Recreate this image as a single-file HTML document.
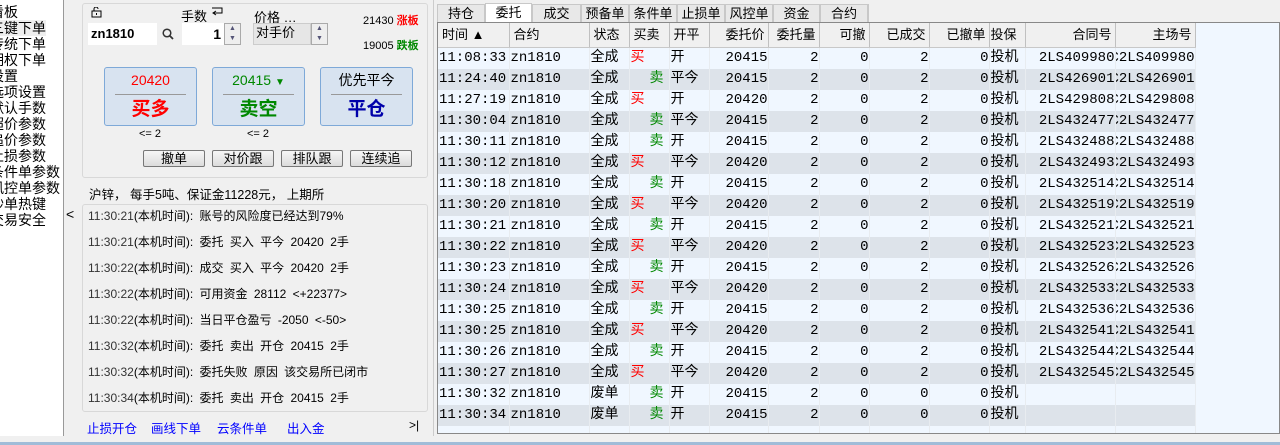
<!DOCTYPE html>
<html><head><meta charset="utf-8"><style>
*{margin:0;padding:0;box-sizing:border-box}
body{width:1280px;height:445px;background:#f0f0f0;position:relative;overflow:hidden;font-family:"Liberation Sans","Noto Sans CJK SC",sans-serif;font-size:12px;color:#000}
.abs{position:absolute}
#nav{left:0;top:0;width:64px;height:436px;background:#fff;border-right:1px solid #999;overflow:hidden}
#nav div{position:absolute;left:-10px;font-size:14px;line-height:16px;white-space:nowrap}
.box{border:1px solid #d8d8d8;border-radius:3px;background:#f0f0f0}
.bb{position:absolute;width:93px;height:59px;background:#d8e3f0;border:1px solid #7ea9d8;border-radius:3px;text-align:center}
.bb .p{font-size:14px;line-height:24px;margin:0 10px;border-bottom:1px solid #999;height:27px}
.bb .t{font-size:19px;font-weight:bold;line-height:30px}
.ab{position:absolute;top:150px;width:62px;height:17px;border:1px solid #777;border-radius:2px;background:linear-gradient(#f6f6f6,#dcdcdc);text-align:center;font-size:13px;line-height:15px}
.log{position:absolute;left:88px;font-size:12px;white-space:nowrap;word-spacing:3px}
.log b{font-weight:normal;color:#333;word-spacing:0}
.lk{position:absolute;top:418px;color:#0000ff;font-size:12.5px}
.tab{position:absolute;top:4px;height:19px;border:1px solid #c8c8c8;border-bottom:none;background:#e8e8e8;font-size:13px;text-align:center;line-height:18px}
#tbl{left:437px;top:22px;width:843px;height:412px;border:1px solid #888;background:#f0f7ff;overflow:hidden}
table{border-collapse:collapse;table-layout:fixed;font-size:14px;width:757px}
td{height:21px;white-space:nowrap;overflow:hidden;border-right:1px solid #e8ecf0;padding:0 0 0 1px;line-height:21px;font-family:"Liberation Mono","Noto Sans CJK SC",monospace}
tr.h td{height:24px;background:#f0f0f0;border-right:1px solid #c0c0c0;border-bottom:1px solid #c8c8c8;font-family:"Liberation Sans","Noto Sans CJK SC",sans-serif;font-size:13px;padding-left:4px}
tr.h td.r{padding-right:3px}
tr.d td{background:#dde3ea}
.r{text-align:right}
.red{color:#f00}.grn{color:#080}
td.s{padding-left:20px}
</style></head><body>
<div id="nav" class="abs">
<div style="top:4px">看板</div>
<div style="top:20px;background:#eee">三键下单</div>
<div style="top:36px">传统下单</div>
<div style="top:52px">期权下单</div>
<div style="top:68px">设置</div>
<div style="top:84px">选项设置</div>
<div style="top:100px">默认手数</div>
<div style="top:116px">超价参数</div>
<div style="top:132px">追价参数</div>
<div style="top:148px">止损参数</div>
<div style="top:164px">条件单参数</div>
<div style="top:180px">风控单参数</div>
<div style="top:196px">秒单热键</div>
<div style="top:212px">交易安全</div>
</div>
<div class="abs" style="left:66px;top:206px;font-size:14px">&lt;</div>
<div class="abs box" style="left:82px;top:3px;width:346px;height:175px"></div>
<svg class="abs" style="left:91px;top:7px" width="12" height="11"><rect x="1" y="4" width="9" height="6" fill="none" stroke="#000"/><path d="M3 4V2a2 2 0 0 1 4 0" fill="none" stroke="#000"/><rect x="5" y="6" width="1" height="2"/></svg>
<div class="abs" style="left:88px;top:23px;width:69px;height:22px;background:#fff;font-size:13px;font-weight:bold;line-height:22px;padding-left:3px">zn1810</div>
<svg class="abs" style="left:162px;top:28px" width="12" height="12"><circle cx="5" cy="5" r="3.8" fill="none" stroke="#333" stroke-width="1.5"/><path d="M8 8l3 3" stroke="#333" stroke-width="1.8"/></svg>
<div class="abs" style="left:181px;top:6px;font-size:13px">手数</div>
<svg class="abs" style="left:211px;top:7px" width="12" height="10"><path d="M1 1h10v5H3M5 4L2 6l3 2" fill="none" stroke="#000"/></svg>
<div class="abs" style="left:182px;top:23px;width:42px;height:22px;background:#fff;text-align:right;font-size:14px;font-weight:bold;line-height:22px;padding-right:3px">1</div>
<div class="abs" style="left:224px;top:23px;width:17px;height:22px;border:1px solid #aaa;background:#eee;font-size:7px;text-align:center;line-height:10px;color:#557">▲<br>▼</div>
<div class="abs" style="left:254px;top:7px;font-size:13px">价格 …</div>
<div class="abs" style="left:253px;top:23px;width:58px;height:22px;background:#e6e6e6;border:1px solid #ccc;font-size:13px;line-height:18px;padding-left:2px">对手价</div>
<div class="abs" style="left:311px;top:23px;width:17px;height:22px;border:1px solid #aaa;background:#eee;font-size:7px;text-align:center;line-height:10px;color:#557">▲<br>▼</div>
<div class="abs" style="left:363px;top:12px;font-size:11px">21430 <span style="color:#f00;font-weight:bold">涨板</span></div>
<div class="abs" style="left:363px;top:37px;font-size:11px">19005 <span style="color:#080;font-weight:bold">跌板</span></div>
<div class="bb" style="left:104px;top:67px"><div class="p red">20420</div><div class="t red">买多</div></div>
<div class="bb" style="left:212px;top:67px"><div class="p grn">20415 <span style="font-size:10px">▼</span></div><div class="t grn">卖空</div></div>
<div class="bb" style="left:320px;top:67px"><div class="p">优先平今</div><div class="t" style="color:#00a">平仓</div></div>
<div class="abs" style="left:139px;top:128px;font-size:11px">&lt;= 2</div>
<div class="abs" style="left:247px;top:128px;font-size:11px">&lt;= 2</div>
<div class="ab" style="left:143px">撤单</div><div class="ab" style="left:212px">对价跟</div><div class="ab" style="left:281px">排队跟</div><div class="ab" style="left:350px">连续追</div>
<div class="abs" style="left:89px;top:184px;font-size:12.5px">沪锌， 每手5吨、保证金11228元， 上期所</div>
<div class="abs box" style="left:82px;top:204px;width:346px;height:208px"></div>
<div class="log" style="top:207px"><b>11:30:21</b>(本机时间): 账号的风险度已经达到79%</div>
<div class="log" style="top:233px"><b>11:30:21</b>(本机时间): 委托 买入 平今 20420 2手</div>
<div class="log" style="top:259px"><b>11:30:22</b>(本机时间): 成交 买入 平今 20420 2手</div>
<div class="log" style="top:285px"><b>11:30:22</b>(本机时间): 可用资金 28112 &lt;+22377&gt;</div>
<div class="log" style="top:311px"><b>11:30:22</b>(本机时间): 当日平仓盈亏 -2050 &lt;-50&gt;</div>
<div class="log" style="top:337px"><b>11:30:32</b>(本机时间): 委托 卖出 开仓 20415 2手</div>
<div class="log" style="top:363px"><b>11:30:32</b>(本机时间): 委托失败 原因 该交易所已闭市</div>
<div class="log" style="top:389px"><b>11:30:34</b>(本机时间): 委托 卖出 开仓 20415 2手</div>
<div class="lk" style="left:87px">止损开仓</div><div class="lk" style="left:151px">画线下单</div><div class="lk" style="left:217px">云条件单</div><div class="lk" style="left:287px">出入金</div>
<div class="abs" style="left:409px;top:418px;font-size:12px">&gt;|</div>
<div class="abs" style="left:433px;top:0;width:1px;height:436px;background:#ccc"></div>
<div class="tab" style="left:437px;width:48px">持仓</div>
<div class="tab" style="left:485px;width:47px;background:#fff;top:3px;height:20px">委托</div>
<div class="tab" style="left:532px;width:49px">成交</div>
<div class="tab" style="left:581px;width:48px">预备单</div>
<div class="tab" style="left:629px;width:48px">条件单</div>
<div class="tab" style="left:677px;width:48px">止损单</div>
<div class="tab" style="left:725px;width:48px">风控单</div>
<div class="tab" style="left:773px;width:47px">资金</div>
<div class="tab" style="left:820px;width:48px">合约</div>
<div class="abs" style="left:868px;top:4px;width:2px;height:19px;border-left:1px solid #c8c8c8"></div>
<div id="tbl" class="abs">
<table>
<colgroup><col style="width:71px"><col style="width:80px"><col style="width:40px"><col style="width:40px"><col style="width:40px"><col style="width:59px"><col style="width:51px"><col style="width:50px"><col style="width:60px"><col style="width:60px"><col style="width:36px"><col style="width:90px"><col style="width:80px"></colgroup>
<tr class="h"><td>时间 ▲</td><td>合约</td><td>状态</td><td>买卖</td><td>开平</td><td class="r">委托价</td><td class="r">委托量</td><td class="r">可撤</td><td class="r">已成交</td><td class="r">已撤单</td><td style="padding-left:1px">投保</td><td class="r">合同号</td><td class="r">主场号</td></tr>
<tbody id="rows"></tbody>
</table>
</div>
<div class="abs" style="left:0;top:442px;width:1280px;height:3px;background:#a0bcd8"></div>
<script>
var d=[["11:08:33","全成",1,"开","20415",2,"409980"],["11:24:40","全成",0,"平今","20415",2,"426901"],["11:27:19","全成",1,"开","20420",2,"429808"],["11:30:04","全成",0,"平今","20415",2,"432477"],["11:30:11","全成",0,"开","20415",2,"432488"],["11:30:12","全成",1,"平今","20420",2,"432493"],["11:30:18","全成",0,"开","20415",2,"432514"],["11:30:20","全成",1,"平今","20420",2,"432519"],["11:30:21","全成",0,"开","20415",2,"432521"],["11:30:22","全成",1,"平今","20420",2,"432523"],["11:30:23","全成",0,"开","20415",2,"432526"],["11:30:24","全成",1,"平今","20420",2,"432533"],["11:30:25","全成",0,"开","20415",2,"432536"],["11:30:25","全成",1,"平今","20420",2,"432541"],["11:30:26","全成",0,"开","20415",2,"432544"],["11:30:27","全成",1,"平今","20420",2,"432545"],["11:30:32","废单",0,"开","20415",0,""],["11:30:34","废单",0,"开","20415",0,""]];
var h="";d.forEach(function(r,i){h+='<tr class="'+(i%2?'d':'')+'"><td>'+r[0]+'</td><td>zn1810</td><td>'+r[1]+'</td>'+(r[2]?'<td><span class="red">买</span></td>':'<td class="s"><span class="grn">卖</span></td>')+'<td>'+r[3]+'</td><td class="r">'+r[4]+'</td><td class="r">2</td><td class="r">0</td><td class="r">'+r[5]+'</td><td class="r">0</td><td>投机</td><td class="r">'+(r[6]?'2LS'+r[6]:'')+'</td><td style="direction:rtl;text-align:left;padding:0">'+(r[6]?'C2LS'+r[6]:'')+'</td></tr>'});
h+='<tr><td></td><td></td><td></td><td></td><td></td><td></td><td></td><td></td><td></td><td></td><td></td><td></td><td></td></tr>';
document.getElementById("rows").innerHTML=h;
</script>
</body></html>
